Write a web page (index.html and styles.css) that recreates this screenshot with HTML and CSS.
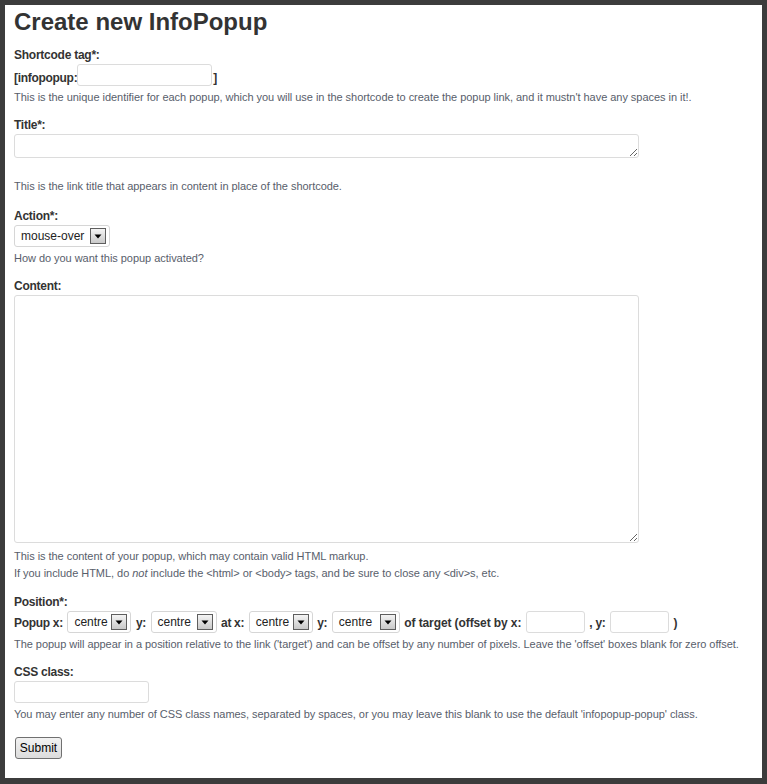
FILE: index.html
```html
<!DOCTYPE html>
<html>
<head>
<meta charset="utf-8">
<link rel="stylesheet" href="styles.css">
</head>
<body>
<div class="frame">
  <h1 class="title">Create new InfoPopup</h1>
  <form class="form">
    <div class="label first">Shortcode tag*:</div>
    <div class="row">
      <span class="rtext">[infopopup:</span>
      <input class="inp inp-tag" type="text">
      <span class="rtext">]</span>
    </div>
    <p class="help">This is the unique identifier for each popup, which you will use in the shortcode to create the popup link, and it mustn't have any spaces in it!.</p>

    <div class="label">Title*:</div>
    <textarea class="ta ta-title"></textarea>
    <p class="help help-far">This is the link title that appears in content in place of the shortcode.</p>

    <div class="label label-action">Action*:</div>
    <div class="select sel-action"><span class="sel-val">mouse-over</span><span class="sel-btn"><svg width="8" height="5" viewBox="0 0 8 5"><path d="M0.5 0.5h7L4 4.5z" fill="#000"/></svg></span></div>
    <p class="help">How do you want this popup activated?</p>

    <div class="label">Content:</div>
    <textarea class="ta ta-content"></textarea>
    <p class="help help-content">This is the content of your popup, which may contain valid HTML markup.<br>If you include HTML, do <em>not</em> include the &lt;html&gt; or &lt;body&gt; tags, and be sure to close any &lt;div&gt;s, etc.</p>

    <div class="label label-pos">Position*:</div>
    <div class="row row-pos">
      <span class="rtext">Popup x:</span>
      <div class="select sel-x"><span class="sel-val">centre</span><span class="sel-btn"><svg width="8" height="5" viewBox="0 0 8 5"><path d="M0.5 0.5h7L4 4.5z" fill="#000"/></svg></span></div>
      <span class="rtext">y:</span>
      <div class="select sel-y"><span class="sel-val">centre</span><span class="sel-btn"><svg width="8" height="5" viewBox="0 0 8 5"><path d="M0.5 0.5h7L4 4.5z" fill="#000"/></svg></span></div>
      <span class="rtext">at x:</span>
      <div class="select sel-x"><span class="sel-val">centre</span><span class="sel-btn"><svg width="8" height="5" viewBox="0 0 8 5"><path d="M0.5 0.5h7L4 4.5z" fill="#000"/></svg></span></div>
      <span class="rtext">y:</span>
      <div class="select sel-y2"><span class="sel-val">centre</span><span class="sel-btn"><svg width="8" height="5" viewBox="0 0 8 5"><path d="M0.5 0.5h7L4 4.5z" fill="#000"/></svg></span></div>
      <span class="rtext rtext-wide">of target (offset by x:</span>
      <input class="inp inp-off" type="text">
      <span class="rtext">, y:</span>
      <input class="inp inp-off" type="text">
      <span class="rtext">)</span>
    </div>
    <p class="help">The popup will appear in a position relative to the link ('target') and can be offset by any number of pixels. Leave the 'offset' boxes blank for zero offset.</p>

    <div class="label">CSS class:</div>
    <input class="inp inp-css" type="text">
    <p class="help">You may enter any number of CSS class names, separated by spaces, or you may leave this blank to use the default 'infopopup-popup' class.</p>

    <button class="submit" type="button">Submit</button>
  </form>
</div>
</body>
</html>
```
FILE: styles.css
```css
html, body {
  margin: 0;
  padding: 0;
}
body {
  font-family: "Liberation Sans", Arial, sans-serif;
  color: #333;
}
.frame {
  box-sizing: border-box;
  width: 767px;
  height: 784px;
  border: 5px solid #3c3c3c;
  border-bottom-width: 6px;
  background: #fff;
  padding: 3px 9px 0 9px;
}
.title {
  margin: 0;
  font-size: 24px;
  line-height: 28px;
  font-weight: bold;
  color: #333;
}
.form {
  margin: 0;
}
.label {
  font-size: 12px;
  line-height: 18px;
  font-weight: bold;
  letter-spacing: -0.25px;
  color: #333;
  margin-top: 10px;
}
.label.first {
  margin-top: 10px;
}
.label-action {
  margin-top: 12px;
}
.label-pos {
  margin-top: 11px;
}
.row {
  display: flex;
  align-items: flex-end;
  height: 22px;
}
.rtext {
  font-size: 12px;
  line-height: 18px;
  font-weight: bold;
  letter-spacing: -0.3px;
  color: #333;
  margin-bottom: -1px;
  white-space: nowrap;
}
.row-pos {
  align-items: center;
  gap: 4.5px;
}
.row-pos .rtext {
  margin-bottom: 0;
  margin-top: 2px;
}
.row-pos .rtext-wide {
  letter-spacing: -0.1px;
}
.help {
  margin: 3px 0 0 0;
  font-size: 11px;
  line-height: 17px;
  letter-spacing: -0.04px;
  color: #585e6b;
}
.help-far {
  margin-top: 20px;
}
.help-content {
  margin-top: 5px;
}
.help em {
  font-style: italic;
}
.inp {
  box-sizing: border-box;
  display: block;
  height: 22px;
  border: 1px solid #dcdcdc;
  border-radius: 3px;
  background: #fff;
  padding: 0 4px;
  margin: 0;
  font-family: inherit;
  font-size: 12px;
  outline: none;
}
.inp-tag {
  width: 135px;
  margin: 0 1px 0 0;
}
.inp-off {
  width: 59px;
}
.inp-css {
  width: 135px;
}
.ta {
  box-sizing: border-box;
  display: block;
  width: 625px;
  border: 1px solid #dcdcdc;
  border-radius: 3px;
  margin: 0;
  padding: 2px 4px;
  font-family: inherit;
  font-size: 12px;
  outline: none;
}
.ta-title {
  height: 24px;
}
.ta-content {
  height: 248px;
}
.select {
  box-sizing: border-box;
  display: flex;
  align-items: center;
  height: 22px;
  border: 1px solid #d6d6d6;
  border-radius: 3px;
  background: #fff;
  padding: 0 3px 0 6px;
  font-size: 12px;
  color: #222;
}
.sel-action {
  width: 96px;
}
.sel-x {
  width: 64px;
}
.sel-y {
  width: 66px;
}
.sel-y2 {
  width: 68px;
}
.sel-val {
  flex: 1;
  white-space: nowrap;
}
.sel-btn {
  box-sizing: border-box;
  width: 16px;
  height: 16px;
  border: 1px solid #5e5e5e;
  background: linear-gradient(#f4f4f4, #c9c9c9);
  display: flex;
  align-items: center;
  justify-content: center;
}
.sel-btn svg {
  display: block;
}
.submit {
  display: block;
  box-sizing: border-box;
  margin: 14px 0 0 1px;
  width: 47px;
  height: 22px;
  padding: 0;
  border: 1px solid #707070;
  border-radius: 3px;
  background: linear-gradient(#f2f2f2, #dcdcdc);
  font-family: inherit;
  font-size: 12px;
  color: #000;
}
```
